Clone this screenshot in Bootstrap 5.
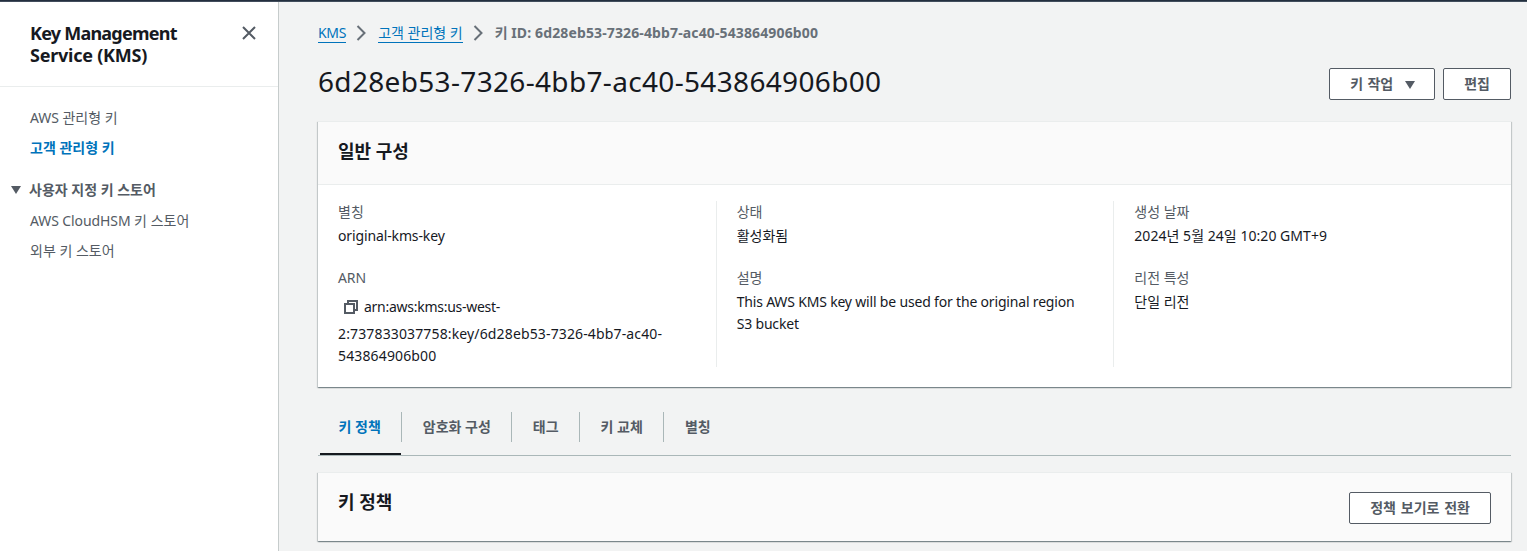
<!DOCTYPE html>
<html lang="ko">
<head>
<meta charset="utf-8">
<title>Key Management Service</title>
<meta name="viewport" content="width=device-width, initial-scale=1">
<link href="https://cdn.jsdelivr.net/npm/bootstrap@5.3.0/dist/css/bootstrap.min.css" rel="stylesheet">
<style>
body{font-family:"Noto Sans","Noto Sans CJK KR",sans-serif;font-size:14px;line-height:22px;color:#16191f;background:#f2f3f3;height:551px;overflow:hidden}
.topline{height:2px;background:#232f3e;border-bottom:1px solid #414d5c}
.shell{height:549px}
.side{width:279px;border-right:1px solid #c6cccc;color:#545b64}
.side-head{height:85px;padding:20px 21px 0 30px;border-bottom:1px solid #eaeded;color:#16191f}
.side-title{font-size:18px;line-height:22px;font-weight:700;margin:0;letter-spacing:-.77px}
.side-title .second{letter-spacing:-.24px}
.side-close{margin-top:3px}
.side a,.side-group{color:#545b64;text-decoration:none;display:block;padding-left:30px;white-space:nowrap}
.side a.active{color:#0073bb;font-weight:700}
.side-group{padding-left:10px;font-weight:700;margin:20px 0 9px}
.side-group svg{margin-right:7px}
.latin{letter-spacing:-.1px}
.crumb-id{letter-spacing:.13px}
.page{padding:20px 16px 0 39px}
.crumbs{color:#687078;height:22px}
.crumbs a{color:#0073bb;text-decoration:none;border-bottom:1px solid #0073bb;line-height:18px;height:19px}
.crumbs .latin{letter-spacing:-.3px}
.title-row{height:77px;padding-top:19px}
.page-title{font-size:28px;line-height:36px;font-weight:400;margin:0;letter-spacing:.33px}
.actions{padding-top:5px}
.btn-aws{height:32px;border:1px solid #545b64;border-radius:2px;background:#fff;color:#545b64;font-size:14px;line-height:20px;font-weight:700;padding:5px 20px;white-space:nowrap;word-spacing:.8px}
.btn-aws svg{margin:0 -2px 0 11px}
.btn-switch{margin-top:1px;word-spacing:1.2px}
.panel{background:#fff;border-top:1px solid #eaeded;box-shadow:0 1px 1px 0 rgba(0,28,36,.3),1px 1px 1px 0 rgba(0,28,36,.15),-1px 1px 1px 0 rgba(0,28,36,.15)}
.panel-head{background:#fafafa;padding:18px 20px 22px;border-bottom:1px solid #eaeded}
.panel-head.has-action{padding-bottom:17px;border-bottom:0}
.panel-title{font-size:18px;line-height:22px;font-weight:700;margin:0}
.panel-body{padding:16px 0 20px}
.detail{padding:0 20px;height:166px;white-space:nowrap}
.detail+.detail{border-left:1px solid #eaeded}
.term{color:#545b64;margin-bottom:2px}
.value{margin-bottom:20px}
.copy-line{height:32px;padding-left:5px;gap:5px}
.fit-key{letter-spacing:-.13px}
.fit-arn{letter-spacing:-.27px}
.fit-num{letter-spacing:.14px}
.fit-text{letter-spacing:-.18px}
.fit-date{letter-spacing:.04px}
.tabs{height:69px;padding-top:25px;border-bottom:1px solid #aab7b8;margin-bottom:16px}
.tab{color:#545b64;font-weight:700;padding:4px 20px 0 21px;height:30px;border-right:1px solid #aab7b8}
.tab:first-child{padding-left:20.500px}
.tab:last-child{border-right:0}
.tab.active{color:#0073bb;position:relative}
.tab.active::after{content:"";position:absolute;left:2px;right:0;bottom:-13px;height:2px;background:#16191f}
</style>
</head>
<body>
<div class="topline"></div>
<div class="shell d-flex">
  <nav class="side bg-white flex-shrink-0">
    <div class="side-head d-flex justify-content-between">
      <h2 class="side-title">Key Management<br><span class="second">Service (KMS)</span></h2>
      <svg width="16" height="16" viewBox="0 0 16 16" fill="none" stroke="#545b64" stroke-width="2" class="side-close"><path d="M2 2l12 12M14 2L2 14"/></svg>
    </div>
    <div class="pt-3">
      <a href="#" class="mt-1"><span class="latin">AWS</span> 관리형 키</a>
      <a href="#" class="mt-2 active">고객 관리형 키</a>
      <div class="side-group d-flex align-items-center"><svg width="12" height="8" viewBox="0 0 12 8" fill="#545b64"><path d="M1 0h10L6 8z"/></svg>사용자 지정 키 스토어</div>
      <a href="#"><span class="latin">AWS CloudHSM</span> 키 스토어</a>
      <a href="#" class="mt-2">외부 키 스토어</a>
    </div>
  </nav>
  <main class="page flex-grow-1">
    <div class="crumbs d-flex align-items-center">
      <a href="#"><span class="latin">KMS</span></a>
      <svg width="32" height="16" viewBox="0 0 32 16" fill="none" stroke="#687078" stroke-width="2"><path d="M11.500 1l7 7-7 7"/></svg>
      <a href="#">고객 관리형 키</a>
      <svg width="32" height="16" viewBox="0 0 32 16" fill="none" stroke="#687078" stroke-width="2"><path d="M11.500 1l7 7-7 7"/></svg>
      <strong>키 <span class="crumb-id">ID: 6d28eb53-7326-4bb7-ac40-543864906b00</span></strong>
    </div>
    <div class="title-row d-flex justify-content-between">
      <h1 class="page-title">6d28eb53-7326-4bb7-ac40-543864906b00</h1>
      <div class="actions d-flex align-items-start gap-2">
        <button class="btn-aws">키 작업<svg width="12" height="8" viewBox="0 0 12 8" fill="#545b64"><path d="M1 0h10L6 8z"/></svg></button>
        <button class="btn-aws">편집</button>
      </div>
    </div>
    <section class="panel">
      <div class="panel-head"><h2 class="panel-title">일반 구성</h2></div>
      <div class="panel-body row g-0">
        <div class="col-4 detail">
          <div class="term">별칭</div>
          <div class="value fit-key">original-kms-key</div>
          <div class="term latin">ARN</div>
          <div class="copy-line d-flex align-items-center"><svg width="16" height="16" viewBox="0 0 16 16" fill="none" stroke="#545b64" stroke-width="2"><path d="M2 5h9v9H2zM5 5V2h9v9h-3"/></svg><span class="fit-arn">arn:aws:kms:us-west-</span></div>
          <div class="fit-num">2:737833037758:key/6d28eb53-7326-4bb7-ac40-<br>543864906b00</div>
        </div>
        <div class="col-4 detail">
          <div class="term">상태</div>
          <div class="value">활성화됨</div>
          <div class="term">설명</div>
          <div class="fit-text">This AWS KMS key will be used for the original region<br>S3 bucket</div>
        </div>
        <div class="col-4 detail">
          <div class="term">생성 날짜</div>
          <div class="value fit-date">2024년 5월 24일 10:20 GMT+9</div>
          <div class="term">리전 특성</div>
          <div>단일 리전</div>
        </div>
      </div>
    </section>
    <div class="tabs d-flex">
      <div class="tab active">키 정책</div>
      <div class="tab">암호화 구성</div>
      <div class="tab">태그</div>
      <div class="tab">키 교체</div>
      <div class="tab">별칭</div>
    </div>
    <section class="panel">
      <div class="panel-head has-action d-flex justify-content-between">
        <h2 class="panel-title">키 정책</h2>
        <button class="btn-aws btn-switch">정책 보기로 전환</button>
      </div>
    </section>
  </main>
</div>
<script src="https://cdn.jsdelivr.net/npm/bootstrap@5.3.0/dist/js/bootstrap.bundle.min.js"></script>
</body>
</html>
